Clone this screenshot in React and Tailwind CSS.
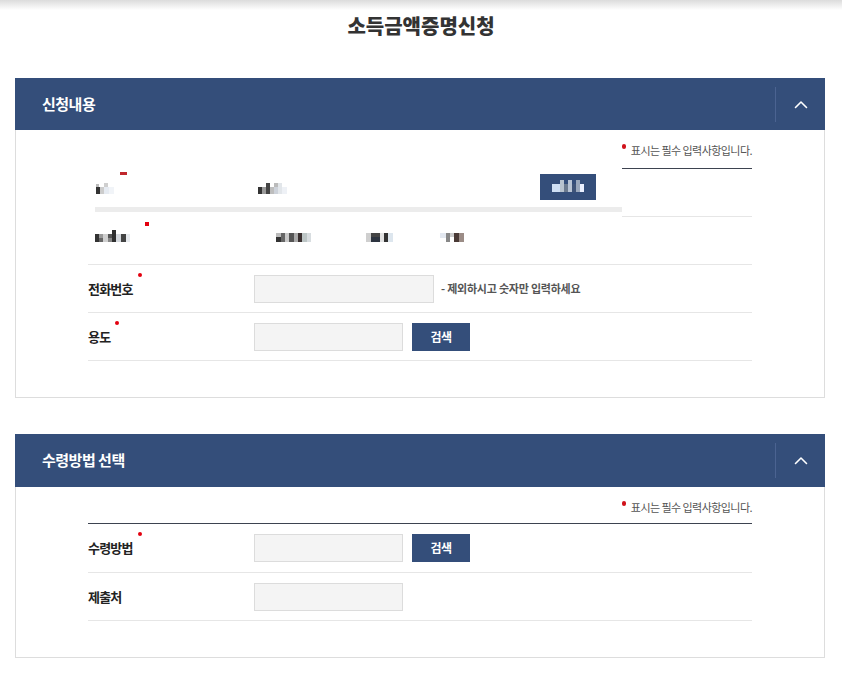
import React from "react";

const FONT = { fontFamily: '"Noto Sans CJK KR", "Noto Sans", sans-serif' };

function Chevron() {
  return (
    <svg width="14" height="9" viewBox="0 0 14 9" fill="none">
      <path d="M1.5 7.5 L7 2 L12.5 7.5" stroke="#ffffff" strokeWidth="1.6" strokeLinecap="round" strokeLinejoin="round" />
    </svg>
  );
}

function Header({ title, h = "h-[52px]" }) {
  return (
    <div className={`flex ${h} items-center bg-[#344e7a]`}>
      <div className="flex-1 pl-[27px] text-[15px] font-bold tracking-[-0.5px] text-white">{title}</div>
      <div className="h-[35px] w-px bg-[#4b6391]" />
      <div className="flex w-[49px] items-center justify-center">
        <Chevron />
      </div>
    </div>
  );
}

function Note({ mb }) {
  return (
    <div className={`flex h-[16px] items-center justify-end ${mb}`}>
      <span className="mr-[5px] -mt-[8px] h-[5px] w-[4px] rounded-full bg-[#d0121b]" />
      <span className="text-[11px] leading-[16px] tracking-[-0.05em] text-[#555]">표시는 필수 입력사항입니다.</span>
    </div>
  );
}

function Dot() {
  return <span className="ml-[5px] -mt-[6px] h-[4px] w-[4px] self-start rounded-full bg-[#e3000f]" />;
}

function Label({ text, req }) {
  return (
    <div className="flex w-[166px] items-center">
      <div className="flex items-center">
        <span className="text-[13px] font-bold leading-[20px] tracking-[-0.8px] text-[#222]">{text}</span>
        {req && <Dot />}
      </div>
    </div>
  );
}

function Input({ w }) {
  return <div className={`h-[28px] ${w} border border-[#dcdcdc] bg-[#f4f4f4]`} />;
}

function SearchBtn() {
  return (
    <div className="ml-[9px] flex h-[28px] w-[58px] items-center justify-center bg-[#344e7a] text-[12px] font-bold tracking-[-0.5px] text-white">
      검색
    </div>
  );
}

function Row({ children, h = "h-[48px]" }) {
  return <div className={`flex ${h} items-center border-b border-[#e6e6e6]`}>{children}</div>;
}

function MosaicRow1() {
  const r = [
    [32, 4, 7, 3, "#c0272d"],
    [8, 16, 3, 3, "#bbbbbb"],
    [8, 19, 4, 7, "#333333"],
    [12, 19, 4, 7, "#cccccc"],
    [16, 15, 4, 4, "#cfcfcf"],
    [16, 19, 5, 7, "#e6ebf2"],
    [21, 19, 5, 7, "#f1f4f8"],
    [170, 19, 4, 7, "#333333"],
    [174, 19, 4, 7, "#9a9a9a"],
    [178, 15, 4, 11, "#444444"],
    [182, 19, 4, 7, "#bdbdbd"],
    [186, 15, 4, 4, "#bbbbbb"],
    [186, 19, 4, 7, "#cdd2da"],
    [190, 15, 4, 11, "#e2e6ea"],
    [194, 19, 5, 7, "#eef1f6"],
    [452, 6, 56, 26, "#344e7a"],
    [464, 16, 8, 8, "#cfe0f5"],
    [472, 12, 4, 12, "#b9c4cf"],
    [476, 16, 4, 8, "#6b7a8e"],
    [480, 12, 4, 12, "#b8c4d4"],
    [484, 16, 4, 8, "#3f5478"],
    [488, 12, 4, 12, "#9aa8bc"],
    [492, 16, 4, 8, "#eaf0ff"],
    [7, 39, 527, 5, "#ececec"],
  ];
  return (
    <svg width="534" height="49" viewBox="0 0 534 49">
      {r.map(([x, y, w, h, c], i) => (
        <rect key={i} x={x} y={y} width={w} height={h} fill={c} />
      ))}
    </svg>
  );
}

function MosaicRow2() {
  const r = [
    [57, 5, 4, 4, "#e3000f"],
    [7, 17, 4, 8, "#333333"],
    [11, 17, 4, 4, "#999999"],
    [11, 21, 4, 4, "#666666"],
    [15, 17, 5, 8, "#cfcfcf"],
    [20, 17, 4, 4, "#555555"],
    [20, 21, 4, 4, "#888888"],
    [24, 13, 4, 12, "#2f2f2f"],
    [28, 17, 5, 8, "#d5d9de"],
    [33, 17, 5, 8, "#444444"],
    [38, 17, 4, 8, "#e8ebef"],
    [188, 16, 5, 4, "#bbbbbb"],
    [188, 20, 5, 5, "#333333"],
    [193, 16, 4, 9, "#666666"],
    [197, 16, 4, 9, "#c9c9c9"],
    [201, 16, 5, 9, "#555555"],
    [206, 16, 4, 9, "#aaaaaa"],
    [210, 16, 4, 9, "#3a3030"],
    [214, 16, 5, 9, "#bcc5c5"],
    [219, 16, 4, 9, "#d8dde0"],
    [278, 16, 5, 9, "#cfcfcf"],
    [283, 16, 9, 4, "#444444"],
    [283, 20, 9, 5, "#2d3440"],
    [292, 16, 4, 9, "#e2e2e2"],
    [296, 16, 4, 9, "#333333"],
    [300, 16, 5, 9, "#dde6ee"],
    [352, 16, 6, 5, "#e3e8f0"],
    [358, 16, 4, 9, "#888888"],
    [362, 16, 4, 4, "#cccccc"],
    [366, 16, 5, 9, "#4a3a36"],
    [371, 16, 5, 9, "#9b8c86"],
  ];
  return (
    <svg width="664" height="47" viewBox="0 0 664 47">
      {r.map(([x, y, w, h, c], i) => (
        <rect key={i} x={x} y={y} width={w} height={h} fill={c} />
      ))}
    </svg>
  );
}

export default function App() {
  return (
    <div className="min-h-[680px] bg-white" style={FONT}>
      <div className="h-[10px] bg-gradient-to-b from-[#dcdcdc] to-white" />
      <div className="h-[66px]">
        <h1 className="mt-[2px] text-center text-[20px] font-extrabold leading-[28px] tracking-[0px] text-[#333]">소득금액증명신청</h1>
      </div>

      <div className="ml-[15px] w-[810px]">
        <Header title="신청내용" />
        <div className="border border-t-0 border-[#dddddd] px-[72px] pb-[36px] pt-[12px]">
          <Note mb="mb-[10px]" />
          <div className="flex h-[49px]">
            <div className="w-[534px]">
              <MosaicRow1 />
            </div>
            <div className="flex-1 border-b border-t border-b-[#e6e6e6] border-t-[#3d4350]" />
          </div>
          <div className="h-[48px] border-b border-[#e6e6e6]">
            <MosaicRow2 />
          </div>
          <Row>
            <Label text="전화번호" req />
            <Input w="w-[180px]" />
            <span className="ml-[7px] text-[11px] font-bold tracking-[-0.02em] text-[#555]">- 제외하시고 숫자만 입력하세요</span>
          </Row>
          <Row>
            <Label text="용도" req />
            <Input w="w-[149px]" />
            <SearchBtn />
          </Row>
        </div>
      </div>

      <div className="ml-[15px] mt-[36px] w-[810px]">
        <Header title="수령방법 선택" h="h-[53px]" />
        <div className="border border-t-0 border-[#dddddd] px-[72px] pb-[36px] pt-[12px]">
          <Note mb="mb-[8px]" />
          <div className="border-t border-[#3d4350]">
            <Row h="h-[49px]">
              <Label text="수령방법" req />
              <Input w="w-[149px]" />
              <SearchBtn />
            </Row>
            <Row>
              <Label text="제출처" />
              <Input w="w-[149px]" />
            </Row>
          </div>
        </div>
      </div>
    </div>
  );
}
